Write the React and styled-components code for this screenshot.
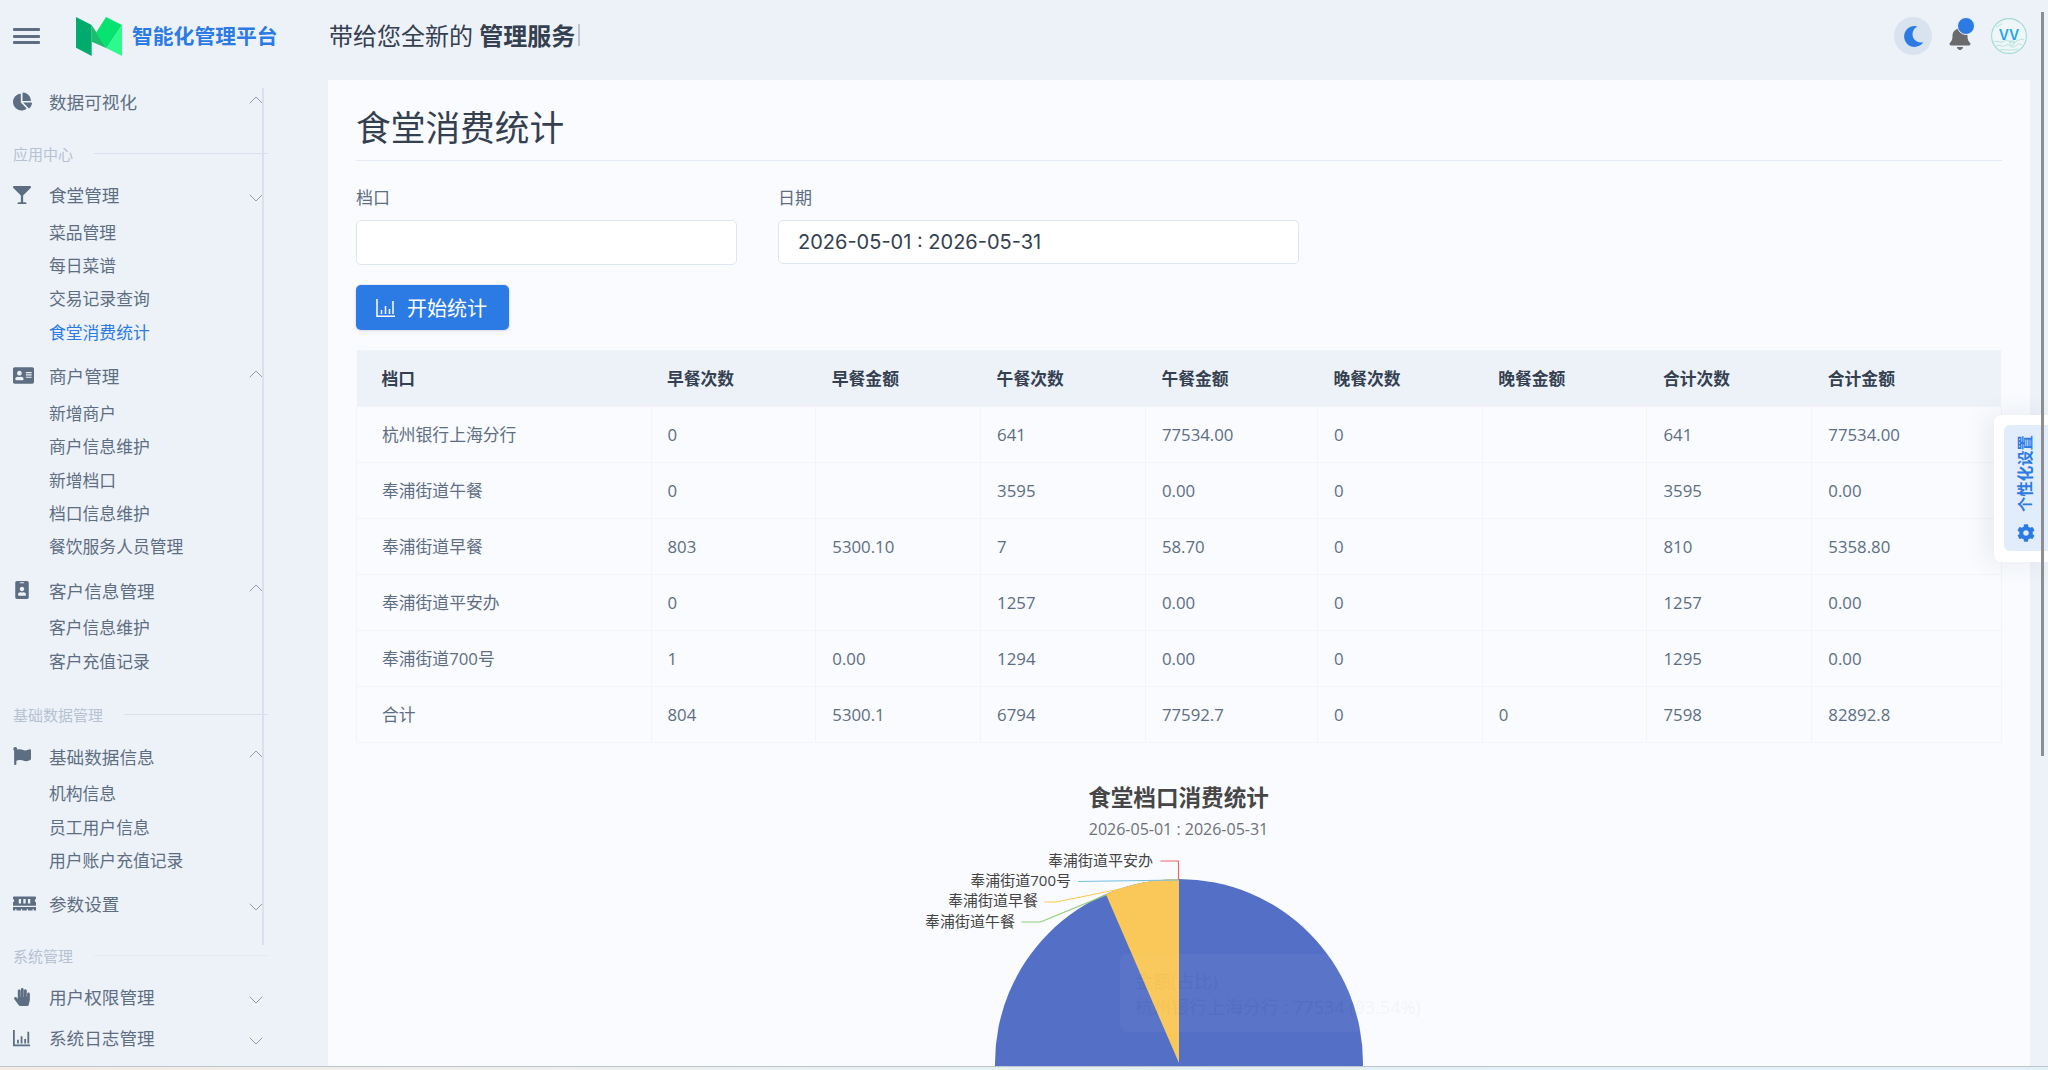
import React from 'react';
import styled, { createGlobalStyle } from 'styled-components';
import { ChevronDown, ChevronUp } from 'lucide-react';
import {
  FaAddressCard, FaBell, FaChartPie, FaCog, FaFlag, FaGlassMartini,
  FaHandPaper, FaIdBadge, FaMemory, FaMoon,
} from 'react-icons/fa';

const FONT = '"Open Sans", "Noto Sans CJK SC", sans-serif';

const GlobalStyle = createGlobalStyle`
  html, body {
    margin: 0;
    height: 100%;
    overflow: hidden;
    background: #edf2f9;
    font-family: ${FONT};
    color: #5e6e82;
  }
  * { box-sizing: border-box; }
`;

const Page = styled.div`
  position: relative;
  width: 2048px;
  height: 1070px;
  display: flex;
  flex-direction: column;
  overflow: hidden;
`;
const Shell = styled.div`
  height: 1066px;
  display: flex;
  flex-direction: column;
  overflow: hidden;
`;
const BottomStrip = styled.div`
  flex: 1;
  border-top: 1px solid #bcc6cf;
  background: linear-gradient(90deg, #f5ebe4 0%, #eef0ee 30%, #e2f0f5 60%, #e4f0f6 100%);
`;

const Topbar = styled.header`
  flex: none;
  height: 80px;
  display: flex;
  align-items: center;
  padding: 0 21px 8px 13px;
`;
const Burger = styled.div`
  width: 27px;
  height: 16px;
  display: flex;
  flex-direction: column;
  justify-content: space-between;
  margin-right: 36px;
  span {
    display: block;
    height: 3px;
    border-radius: 1px;
    background: #5e6e82;
  }
`;
const BrandName = styled.div`
  margin: 0 0 3px 10px;
  width: 197px;
  font-size: 20.8px;
  font-weight: 700;
  color: #2c7be5;
  white-space: nowrap;
`;
const Slogan = styled.div`
  display: flex;
  align-items: center;
  margin-bottom: 3px;
  font-size: 24px;
  color: #344050;
  white-space: pre;
  strong { font-weight: 700; }
`;
const Caret = styled.span`
  display: inline-block;
  width: 2px;
  height: 22px;
  margin-left: 3px;
  background: #bcc4ce;
`;
const TopRight = styled.div`
  margin-left: auto;
  display: flex;
  align-items: center;
`;
const ThemeToggle = styled.div`
  width: 38px;
  height: 38px;
  border-radius: 50%;
  background: #d9e3f0;
  color: #2c7be5;
  display: flex;
  align-items: center;
  justify-content: center;
  font-size: 21px;
  margin-right: 16px;
`;
const BellWrap = styled.div`
  position: relative;
  width: 23px;
  height: 24px;
  color: #6b6b6e;
  font-size: 24px;
  margin-right: 20px;
  margin-top: 3px;
  svg { display: block; }
`;
const BellDot = styled.span`
  position: absolute;
  top: -9px;
  left: 9px;
  width: 18px;
  height: 18px;
  border-radius: 50%;
  background: #2c7be5;
  border: 1px solid #edf2f9;
`;

const Body = styled.div`
  flex: 1;
  min-height: 0;
  display: flex;
`;

const Sidebar = styled.nav`
  flex: none;
  width: 328px;
  padding: 1px 60px 0 13px;
`;
const SectionTitle = styled.div`
  height: 42px;
  margin-top: 10px;
  display: flex;
  align-items: center;
  gap: 21px;
  font-size: 15px;
  color: #b6c1d2;
  white-space: nowrap;
  &::after {
    content: '';
    flex: 1;
    height: 1px;
    background: ${p => (p.$faint ? '#e4eaf3' : '#d8e2ef')};
  }
`;
const NavRow = styled.div`
  height: 41px;
  display: flex;
  align-items: center;
  font-size: 17.6px;
  color: #5e6e82;
  white-space: nowrap;
`;
const NavIcon = styled.span`
  flex: none;
  width: 36px;
  display: flex;
  align-items: center;
  font-size: ${p => p.$size || 18}px;
  color: #5e6e82;
`;
const Chevron = styled.span`
  margin-left: auto;
  display: flex;
  color: #8f9db0;
  transform: translateY(${p => (p.$open ? -2 : 3)}px);
`;
const SubList = styled.div`
  padding: 0 0 6.5px 36px;
`;
const SubItem = styled.div`
  height: 33.4px;
  display: flex;
  align-items: center;
  font-size: 16.8px;
  color: ${p => (p.$active ? '#2c7be5' : '#5e6e82')};
  white-space: nowrap;
`;
const SideTrack = styled.div`
  position: absolute;
  left: 262px;
  top: 88px;
  width: 2px;
  height: 857px;
  background: #d8e2ef;
`;

const Panel = styled.main`
  flex: none;
  width: 1702px;
  background: #f9fbfe;
  padding: 0 28px;
  overflow: hidden;
`;
const Heading = styled.div`
  padding: 24px 0 8px;
  border-bottom: 1px solid #e5ebf4;
`;
const HeadingText = styled.h1`
  margin: 0;
  font-size: 34.7px;
  line-height: 48px;
  font-weight: 400;
  color: #344050;
`;
const FilterRow = styled.div`
  display: flex;
  gap: 41px;
  margin-top: 25px;
`;
const Field = styled.div`
  width: ${p => p.$w}px;
`;
const FieldLabel = styled.label`
  display: block;
  font-size: 17px;
  line-height: 24px;
  margin-bottom: 10px;
  color: #5e6e82;
`;
const Input = styled.input`
  display: block;
  width: 100%;
  height: ${p => p.$h || 45}px;
  padding: 0 19px;
  background: #fff;
  border: 1px solid #dde6f1;
  border-radius: 5px;
  outline: none;
  font-family: Inter, ${FONT};
  font-size: 20px;
  color: #344050;
`;
const StartButton = styled.button`
  display: flex;
  align-items: center;
  gap: 11px;
  width: 153px;
  height: 45px;
  margin-top: 20px;
  padding: 0 0 0 20px;
  border: 0;
  border-radius: 5px;
  background: #2c7be5;
  color: #fff;
  font-family: ${FONT};
  font-size: 20px;
  box-shadow: 0 0 0 1px rgba(43, 45, 80, .06), 0 2px 5px rgba(43, 45, 80, .08);
`;

const Table = styled.table`
  width: 1645px;
  margin-top: 20px;
  border-collapse: collapse;
  table-layout: fixed;
`;
const HeadCell = styled.th`
  height: 56.5px;
  padding: 0 0 0 ${p => (p.$first ? 25 : 16)}px;
  background: #edf2f9;
  text-align: left;
  font-size: 16.8px;
  font-weight: 700;
  color: #344050;
`;
const Cell = styled.td`
  height: 56px;
  padding: 0 0 1px ${p => (p.$first ? 25 : 16)}px;
  border: 1px solid #f1f4f9;
  font-size: 16.8px;
  color: #5e6e82;
`;

const Chart = styled.section`
  position: relative;
  width: 1645px;
  margin-top: 39px;
  text-align: center;
`;
const ChartTitle = styled.div`
  font-size: 22.6px;
  line-height: 32px;
  font-weight: 700;
  color: #464646;
`;
const ChartSub = styled.div`
  margin-top: 3px;
  font-size: 16px;
  line-height: 24px;
  color: #6e7079;
`;
const ChartCanvas = styled.svg`
  display: block;
  margin-top: 4px;
  font-family: ${FONT};
`;
const GhostTooltip = styled.div`
  position: absolute;
  left: 764px;
  top: 172px;
  width: 312px;
  height: 78px;
  padding: 14px 15px;
  border-radius: 8px;
  background: #fff;
  opacity: .03;
  text-align: left;
  font-size: 18px;
  line-height: 26px;
  color: #444;
  white-space: nowrap;
`;

const SettingsTab = styled.aside`
  position: absolute;
  right: 0;
  top: 415px;
  width: 54px;
  height: 147px;
  padding: 10px 0 11px 10px;
  background: #fff;
  border-radius: 8px 0 0 8px;
  box-shadow: -6px 0 24px rgba(65, 78, 110, .1);
`;
const SettingsInner = styled.div`
  height: 100%;
  border-radius: 6px 0 0 6px;
  background: #e2edfb;
  color: #2c7be5;
  display: flex;
  flex-direction: column;
  align-items: center;
  padding: 10px 0 9px;
  justify-content: space-between;
  font-size: 18px;
`;
const SettingsText = styled.span`
  writing-mode: vertical-rl;
  text-orientation: sideways;
  transform: rotate(180deg);
  font-size: 15.4px;
  line-height: 16px;
  font-weight: 600;
`;
const PageScrollThumb = styled.div`
  position: absolute;
  left: 2041px;
  top: 12px;
  width: 3px;
  height: 744px;
  background: #8e8e90;
`;

// logo, drawn from the four facets of the mark
const Logo = () => (
  <svg width="46" height="39" viewBox="0 0 138 117">
    <polygon points="0,0 47,24 47,117 0,92" fill="#00ab6c" />
    <polygon points="47,24 92,94 47,74" fill="#1bbd6f" />
    <polygon points="90,0 138,24 92,94 60,47" fill="#07e36f" />
    <polygon points="138,24 138,117 92,94" fill="#2cfb8c" />
  </svg>
);

const AxisBars = ({ size = 20, weight = 1.5 }) => (
  <svg width={size} height={size} viewBox="0 0 20 20" fill="none" stroke="currentColor" strokeWidth={weight}>
    <path d="M1 1v17.2h18" />
    <path d="M5.5 16v-4M9.5 16V8M13.5 16v-5M17 16V3" />
  </svg>
);

const Avatar = () => (
  <svg width="36" height="38" viewBox="0 0 36 38" fill="none">
    <circle cx="18" cy="19" r="17.4" fill="#f0f6f7" stroke="#9fdad4" strokeWidth="1.1" />
    <path d="M3 25c3-2 5 1 8 0s4-3 7-1 5 2 8 0 5-2 7-1" stroke="#a5dcd6" strokeWidth=".8" />
    <path d="M5 29c3-2 5 1 8 0s4-2 6 0 5 1 7-1 3-1 5 0" stroke="#a5dcd6" strokeWidth=".8" />
    <path d="M9 33c3-1 5 0 8 0s6 0 10-1" stroke="#a5dcd6" strokeWidth=".8" />
    <path d="M5 10c3 0 3-3 6-3" stroke="#a5dcd6" strokeWidth=".8" />
    <circle cx="21" cy="26" r="2.4" stroke="#a5dcd6" strokeWidth=".8" />
    <text x="18" y="23" textAnchor="middle" fontFamily="Inter, sans-serif" fontSize="14" fontWeight="600" fill="#1fa7ec">VV</text>
  </svg>
);

const NAV = [
  { title: '数据可视化', icon: <FaChartPie />, size: 19, open: true },
  { section: '应用中心' },
  {
    title: '食堂管理',
    icon: <FaGlassMartini />,
    size: 18,
    items: ['菜品管理', '每日菜谱', '交易记录查询', '食堂消费统计'],
    active: '食堂消费统计',
  },
  {
    title: '商户管理',
    icon: <FaAddressCard />,
    size: 21,
    open: true,
    items: ['新增商户', '商户信息维护', '新增档口', '档口信息维护', '餐饮服务人员管理'],
  },
  {
    title: '客户信息管理',
    icon: <FaIdBadge />,
    size: 18,
    open: true,
    items: ['客户信息维护', '客户充值记录'],
  },
  { section: '基础数据管理' },
  {
    title: '基础数据信息',
    icon: <FaFlag />,
    size: 18,
    open: true,
    items: ['机构信息', '员工用户信息', '用户账户充值记录'],
  },
  { title: '参数设置', icon: <FaMemory />, size: 23 },
  { section: '系统管理', faint: true },
  { title: '用户权限管理', icon: <FaHandPaper />, size: 18 },
  { title: '系统日志管理', icon: <AxisBars size={18} weight={2} />, size: 18 },
];

const COLUMNS = [294.5, 164.8, 164.8, 164.8, 172, 164.8, 164.8, 164.8, 189.7];
const HEADERS = ['档口', '早餐次数', '早餐金额', '午餐次数', '午餐金额', '晚餐次数', '晚餐金额', '合计次数', '合计金额'];
const ROWS = [
  ['杭州银行上海分行', '0', '', '641', '77534.00', '0', '', '641', '77534.00'],
  ['奉浦街道午餐', '0', '', '3595', '0.00', '0', '', '3595', '0.00'],
  ['奉浦街道早餐', '803', '5300.10', '7', '58.70', '0', '', '810', '5358.80'],
  ['奉浦街道平安办', '0', '', '1257', '0.00', '0', '', '1257', '0.00'],
  ['奉浦街道700号', '1', '0.00', '1294', '0.00', '0', '', '1295', '0.00'],
  ['合计', '804', '5300.1', '6794', '77592.7', '0', '0', '7598', '82892.8'],
];

// slice angle of the yellow wedge, measured from 12 o'clock; chart origin is the table's left edge
const PIE = { cx: 823, cy: 218, r: 184 };
const PIE_LABELS = [
  { text: '奉浦街道平安办', x: 797, y: 16, color: '#ee6666', line: 'M804.5 16H822.5V35' },
  { text: '奉浦街道700号', x: 715, y: 36, color: '#73c0de', line: 'M722 36.5L822.5 35' },
  { text: '奉浦街道早餐', x: 682, y: 56, color: '#fac858', line: 'M688.5 57H700L769 43' },
  { text: '奉浦街道午餐', x: 659, y: 77, color: '#91cc75', line: 'M665.5 77H684.5L750 50' },
];

const PieChart = () => {
  const { cx, cy, r } = PIE;
  const angle = (23.4 * Math.PI) / 180;
  const ex = cx - r * Math.sin(angle);
  const ey = cy - r * Math.cos(angle);
  return (
    <ChartCanvas width="1645" height="300" viewBox="0 0 1645 300">
      <circle cx={cx} cy={cy} r={r} fill="#5470c6" />
      <path d={`M${cx} ${cy}L${ex} ${ey}A${r} ${r} 0 0 1 ${cx} ${cy - r}Z`} fill="#fac858" />
      {PIE_LABELS.map(l => (
        <g key={l.text}>
          <path d={l.line} fill="none" stroke={l.color} strokeWidth="1.2" />
          <text x={l.x} y={l.y + 5} textAnchor="end" fontSize="15" fill="#444">{l.text}</text>
        </g>
      ))}
    </ChartCanvas>
  );
};

const App = () => (
  <Page>
    <GlobalStyle />
    <Shell>
      <Topbar>
        <Burger><span /><span /><span /></Burger>
        <Logo />
        <BrandName>智能化管理平台</BrandName>
        <Slogan>
          带给您全新的 <strong>管理服务</strong>
          <Caret />
        </Slogan>
        <TopRight>
          <ThemeToggle><FaMoon /></ThemeToggle>
          <BellWrap>
            <FaBell />
            <BellDot />
          </BellWrap>
          <Avatar />
        </TopRight>
      </Topbar>
      <Body>
        <Sidebar>
          {NAV.map(entry => (entry.section ? (
            <SectionTitle key={entry.section} $faint={entry.faint}>{entry.section}</SectionTitle>
          ) : (
            <div key={entry.title}>
              <NavRow>
                <NavIcon $size={entry.size}>{entry.icon}</NavIcon>
                {entry.title}
                <Chevron $open={entry.open}>
                  {entry.open
                    ? <ChevronUp size={24} strokeWidth={1} />
                    : <ChevronDown size={24} strokeWidth={1} />}
                </Chevron>
              </NavRow>
              {entry.items && (
                <SubList>
                  {entry.items.map(item => (
                    <SubItem key={item} $active={item === entry.active}>{item}</SubItem>
                  ))}
                </SubList>
              )}
            </div>
          )))}
        </Sidebar>
        <Panel>
          <Heading>
            <HeadingText>食堂消费统计</HeadingText>
          </Heading>
          <FilterRow>
            <Field $w={381}>
              <FieldLabel>档口</FieldLabel>
              <Input />
            </Field>
            <Field $w={521}>
              <FieldLabel>日期</FieldLabel>
              <Input $h={44} defaultValue="2026-05-01 : 2026-05-31" />
            </Field>
          </FilterRow>
          <StartButton>
            <AxisBars size={20} />
            开始统计
          </StartButton>
          <Table>
            <colgroup>
              {COLUMNS.map((w, i) => <col key={i} style={{ width: w }} />)}
            </colgroup>
            <thead>
              <tr>
                {HEADERS.map((h, i) => <HeadCell key={h} $first={i === 0}>{h}</HeadCell>)}
              </tr>
            </thead>
            <tbody>
              {ROWS.map(row => (
                <tr key={row[0]}>
                  {row.map((v, i) => <Cell key={i} $first={i === 0}>{v}</Cell>)}
                </tr>
              ))}
            </tbody>
          </Table>
          <Chart>
            <ChartTitle>食堂档口消费统计</ChartTitle>
            <ChartSub>2026-05-01 : 2026-05-31</ChartSub>
            <PieChart />
            <GhostTooltip>
              金额(占比)
              <br />
              杭州银行上海分行 : 77534 (93.54%)
            </GhostTooltip>
          </Chart>
        </Panel>
      </Body>
    </Shell>
    <BottomStrip />
    <SideTrack />
    <SettingsTab>
      <SettingsInner>
        <SettingsText>个性化设置</SettingsText>
        <FaCog />
      </SettingsInner>
    </SettingsTab>
    <PageScrollThumb />
  </Page>
);

export default App;
